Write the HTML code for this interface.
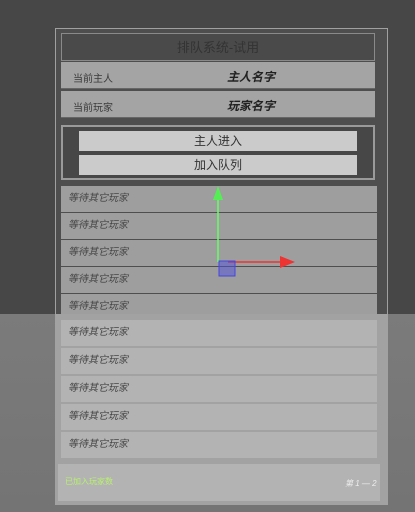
<!DOCTYPE html>
<html><head><meta charset="utf-8"><style>
body{margin:0;width:415px;height:512px;overflow:hidden;position:relative;font-family:"Liberation Sans","Noto Sans CJK SC",sans-serif;
background:linear-gradient(#474747 0,#474747 314px,#7b7b7b 314px,#747474 512px);}
.p{position:absolute;}
.panel{left:55px;top:28px;width:333px;height:477px;background:#4e4e4e;border:1px solid #a0a0a0;box-sizing:border-box;}
.hdr{left:61px;top:33px;width:314px;height:28px;background:#4a4a4a;color:#333;font-size:13px;text-align:center;line-height:28px;border:1px solid #8a8a8a;box-sizing:border-box}
.row{left:61px;width:314px;height:27px;background:#a4a4a4;border-bottom:1px solid #666;box-sizing:border-box;font-size:10px;color:#3a3a3a;}
.row .l{position:absolute;left:12px;top:8px}
.row .v{position:absolute;left:0;width:380px;text-align:center;top:6px;font-size:12px;font-style:italic;font-weight:bold;color:#222}
.box{left:61px;top:125px;width:314px;height:55px;border:2px solid #9a9a9a;box-sizing:border-box;background:#474747}
.btn{left:79px;width:278px;height:20px;background:#cbcbcb;text-align:center;line-height:20px;font-size:12px;color:#333}
.it{left:61px;width:316px;height:26px;background:#9e9e9e;font-size:10px;font-style:italic;color:#444;line-height:26px;padding-left:7px;box-sizing:border-box;}
.lo{background:#b3b3b3}
.foot{left:58px;top:464px;width:322px;height:37px;background:#b3b3b3;}
</style></head><body>
<div class="p panel"></div>
<div class="p" style="left:55px;top:314px;width:333px;height:191px;background:#a2a2a2"></div>
<div class="p hdr">排队系统-试用</div>
<div class="p row" style="top:62px"><span class="l">当前主人</span><span class="v">主人名字</span></div>
<div class="p row" style="top:91px"><span class="l">当前玩家</span><span class="v">玩家名字</span></div>
<div class="p box"></div>
<div class="p btn" style="top:131px">主人进入</div>
<div class="p btn" style="top:155px">加入队列</div>
<div class="p it" style="top:186px">等待其它玩家</div>
<div class="p it" style="top:213px">等待其它玩家</div>
<div class="p it" style="top:240px">等待其它玩家</div>
<div class="p it" style="top:267px">等待其它玩家</div>
<div class="p it" style="top:294px;height:20px;line-height:26px">等待其它玩家</div>
<div class="p it lo" style="top:320px">等待其它玩家</div>
<div class="p it lo" style="top:348px">等待其它玩家</div>
<div class="p it lo" style="top:376px">等待其它玩家</div>
<div class="p it lo" style="top:404px">等待其它玩家</div>
<div class="p it lo" style="top:432px">等待其它玩家</div>
<div class="p foot"></div>
<div class="p" style="left:65px;top:476px;font-size:8px;color:#b8f070">已加入玩家数</div>
<div class="p" style="left:345px;top:478px;font-size:8px;color:#eee;font-style:italic">第 1 — 2</div>
<svg class="p" style="left:0;top:0" width="415" height="512">
<line x1="218" y1="196" x2="218" y2="262" stroke="#6f6" stroke-width="1.5"/>
<polygon points="218,186 213,200 223,200" fill="#5e5"/>
<line x1="228" y1="262" x2="282" y2="262" stroke="#e33" stroke-width="1.5"/>
<polygon points="295,262 280,256 280,268" fill="#e33"/>
<rect x="219" y="261" width="16" height="15" fill="rgba(80,80,220,0.5)" stroke="#44d"/>
</svg>
</body></html>
